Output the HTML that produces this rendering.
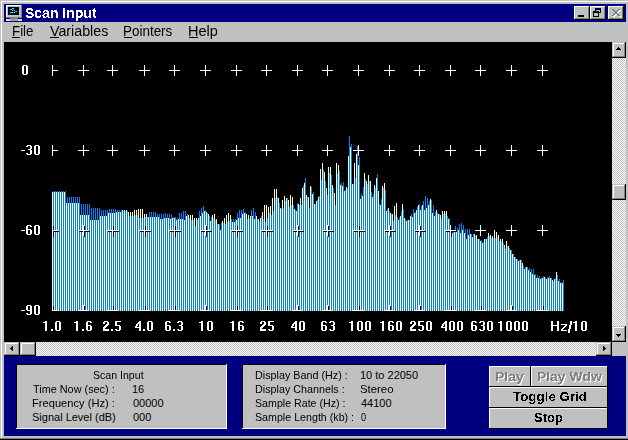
<!DOCTYPE html>
<html><head><meta charset="utf-8">
<style>
html,body{margin:0;padding:0;width:628px;height:440px;overflow:hidden;background:#c0c0c0;}
body{position:relative;font-family:"Liberation Sans",sans-serif;}
.a{position:absolute;}
.tx{position:absolute;white-space:pre;line-height:1;}
.crisp{filter:url(#crisp);}
.chk{position:absolute;background-color:#fff;background-image:linear-gradient(45deg,#c0c0c0 25%,transparent 25%,transparent 75%,#c0c0c0 75%),linear-gradient(45deg,#c0c0c0 25%,transparent 25%,transparent 75%,#c0c0c0 75%);background-size:2px 2px;background-position:0 0,1px 1px;}
.cb{position:absolute;box-sizing:border-box;background:#c0c0c0;box-shadow:inset -1px -1px #000,inset 1px 1px #fff,inset -2px -2px #808080;}
.btn{position:absolute;box-sizing:border-box;background:#c0c0c0;box-shadow:inset -1px -1px #000,inset 1px 1px #c0c0c0,inset -2px -2px #808080,inset 2px 2px #fff;}
.pb{position:absolute;box-sizing:border-box;background:#c0c0c0;box-shadow:inset -1px -1px #000,inset 1px 1px #fff;}
.pt{position:absolute;white-space:pre;line-height:1;font-weight:bold;font-size:13px;color:#000;}
.dis{color:#808080 !important;text-shadow:1px 1px 0 #fff;}
.lbl{position:absolute;white-space:pre;line-height:1;color:#fff;font-weight:bold;filter:url(#crisp);}
.ly{font-size:14px;letter-spacing:0.5px;}
.lx{font-size:14px;letter-spacing:0.8px;}
.pan{position:absolute;box-sizing:border-box;background:#c0c0c0;box-shadow:inset -1px -1px #fff,inset 1px 1px #000;}
.mu{position:absolute;white-space:pre;line-height:1;font-size:14px;color:#000;letter-spacing:0.2px;}
</style></head><body>
<svg width="0" height="0" style="position:absolute"><filter id="crisp" x="0" y="0" width="100%" height="100%"><feComponentTransfer><feFuncA type="discrete" tableValues="0 1"/></feComponentTransfer></filter></svg>
<div class="a" style="left:1px;top:1px;width:627px;height:1px;background:#fff"></div>
<div class="a" style="left:1px;top:1px;width:1px;height:437px;background:#fff"></div>
<div class="a" style="left:0;top:438px;width:628px;height:1px;background:#808080"></div>
<div class="a" style="left:0;top:439px;width:628px;height:1px;background:#000"></div>
<div class="a" style="left:4px;top:4px;width:622px;height:18px;background:#000080"></div>
<svg class="a" style="left:6px;top:5px" width="17" height="16" shape-rendering="crispEdges">
<rect x="0" y="0" width="16" height="13" fill="#c0c0c0"/>
<rect x="0" y="0" width="16" height="1" fill="#fff"/><rect x="0" y="0" width="1" height="13" fill="#fff"/>
<rect x="15" y="0" width="1" height="13" fill="#808080"/><rect x="0" y="12" width="16" height="1" fill="#808080"/>
<rect x="2" y="2" width="11" height="8" fill="#000"/>
<path d="M6 3h2v1h-2zM4 4h2v1h-2zM6 5h1v1h-1zM8 5h1v1h-1zM10 6h1v1h-1zM4 7h5v1h-5z" fill="#00ffff"/>
<path d="M7 4h1v1h-1zM9 6h1v1h-1zM7 7h1v1h-1z" fill="#0080ff"/>
<rect x="12" y="11" width="1" height="1" fill="#00ff00"/>
<rect x="4" y="13" width="8" height="2" fill="#808080"/>
<rect x="0" y="14" width="16" height="2" fill="#e0e0e0"/>
<rect x="4" y="14" width="8" height="2" fill="#a0a0a0"/>
</svg>
<div class="tx crisp" style="left:25.0px;top:6px;font-size:14px;font-weight:bold;color:#fff;">Scan Input</div>
<div class="cb" style="left:574px;top:6px;width:16px;height:14px"><div class="a" style="left:4px;top:9px;width:6px;height:2px;background:#000"></div></div>
<div class="cb" style="left:590px;top:6px;width:16px;height:14px"><svg class="a" style="left:3px;top:2px" width="9" height="9" shape-rendering="crispEdges"><path d="M2 0h6v1h-6zM2 1h6v1h-6zM2 0h1v3h-1zM7 0h1v5h-1zM6 4h2v1h-2zM0 3h6v1h-6zM0 4h6v1h-6zM0 3h1v6h-1zM5 3h1v6h-1zM0 8h6v1h-6z" fill="#000"/></svg></div>
<div class="cb" style="left:608px;top:6px;width:16px;height:14px"><svg class="a" style="left:4px;top:3px" width="9" height="8" shape-rendering="crispEdges"><path d="M0 0h2v1h-2zM6 0h2v1h-2zM1 1h2v1h-2zM5 1h2v1h-2zM2 2h4v1h-4zM3 3h2v1h-2zM2 4h4v1h-4zM1 5h2v1h-2zM5 5h2v1h-2zM0 6h2v1h-2zM6 6h2v1h-2z" fill="#fff" transform="translate(1,1)"/><path d="M0 0h2v1h-2zM6 0h2v1h-2zM1 1h2v1h-2zM5 1h2v1h-2zM2 2h4v1h-4zM3 3h2v1h-2zM2 4h4v1h-4zM1 5h2v1h-2zM5 5h2v1h-2zM0 6h2v1h-2zM6 6h2v1h-2z" fill="#808080"/></svg></div>
<div class="tx" style="left:12.05px;top:24px;font-size:14px;color:#000;transform:scaleX(0.9524);transform-origin:0 0;">File</div><div class="a" style="left:12px;top:37px;width:8px;height:1px;background:#000"></div><div class="tx" style="left:50.0px;top:24px;font-size:14px;color:#000;transform:scaleX(1.0175);transform-origin:0 0;">Variables</div><div class="a" style="left:50px;top:37px;width:9px;height:1px;background:#000"></div><div class="tx" style="left:123.04px;top:24px;font-size:14px;color:#000;transform:scaleX(0.96);transform-origin:0 0;">Pointers</div><div class="a" style="left:124px;top:37px;width:8px;height:1px;background:#000"></div><div class="tx" style="left:187.96px;top:24px;font-size:14px;color:#000;transform:scaleX(1.037);transform-origin:0 0;">Help</div><div class="a" style="left:189px;top:37px;width:9px;height:1px;background:#000"></div>
<svg width="628" height="440" style="position:absolute;left:0;top:0" shape-rendering="crispEdges"><rect x="4" y="42" width="608" height="300" fill="#000"/><path fill="#ffffc0" d="M52 192h1V311h-1zM54 192h1V311h-1zM56 192h1V311h-1zM58 192h1V311h-1zM60 192h1V311h-1zM62 192h1V311h-1zM64 192h1V311h-1zM66 203h1V311h-1zM68 203h1V311h-1zM70 203h1V311h-1zM72 203h1V311h-1zM74 203h1V311h-1zM76 203h1V311h-1zM78 203h1V311h-1zM80 215h1V311h-1zM82 215h1V311h-1zM84 215h1V311h-1zM86 215h1V311h-1zM88 215h1V311h-1zM90 220h1V311h-1zM92 220h1V311h-1zM94 220h1V311h-1zM96 220h1V311h-1zM98 220h1V311h-1zM100 216h1V311h-1zM102 216h1V311h-1zM104 216h1V311h-1zM106 216h1V311h-1zM108 213h1V311h-1zM110 213h1V311h-1zM112 213h1V311h-1zM114 213h1V311h-1zM116 212h1V311h-1zM118 212h1V311h-1zM120 212h1V311h-1zM122 210h1V311h-1zM124 210h1V311h-1zM126 210h1V311h-1zM128 212h1V311h-1zM130 212h1V311h-1zM132 212h1V311h-1zM134 210h1V311h-1zM136 210h1V311h-1zM138 209h1V311h-1zM140 209h1V311h-1zM142 209h1V311h-1zM144 214h1V311h-1zM146 214h1V311h-1zM148 217h1V311h-1zM150 217h1V311h-1zM152 217h1V311h-1zM154 217h1V311h-1zM156 217h1V311h-1zM158 217h1V311h-1zM160 219h1V311h-1zM162 219h1V311h-1zM164 218h1V311h-1zM166 218h1V311h-1zM168 218h1V311h-1zM170 219h1V311h-1zM172 218h1V311h-1zM174 218h1V311h-1zM176 220h1V311h-1zM178 219h1V311h-1zM180 219h1V311h-1zM182 219h1V311h-1zM184 220h1V311h-1zM186 216h1V311h-1zM188 215h1V311h-1zM190 215h1V311h-1zM192 215h1V311h-1zM194 218h1V311h-1zM196 218h1V311h-1zM198 218h1V311h-1zM200 216h1V311h-1zM202 213h1V311h-1zM204 211h1V311h-1zM206 212h1V311h-1zM208 214h1V311h-1zM210 221h1V311h-1zM212 215h1V311h-1zM214 214h1V311h-1zM216 219h1V311h-1zM218 224h1V311h-1zM220 230h1V311h-1zM222 221h1V311h-1zM224 218h1V311h-1zM226 215h1V311h-1zM228 213h1V311h-1zM230 215h1V311h-1zM232 222h1V311h-1zM234 222h1V311h-1zM236 220h1V311h-1zM238 218h1V311h-1zM240 218h1V311h-1zM242 214h1V311h-1zM244 213h1V311h-1zM246 214h1V311h-1zM248 215h1V311h-1zM250 216h1V311h-1zM252 216h1V311h-1zM254 219h1V311h-1zM256 216h1V311h-1zM258 219h1V311h-1zM260 218h1V311h-1zM262 212h1V311h-1zM264 205h1V311h-1zM266 205h1V311h-1zM268 207h1V311h-1zM270 206h1V311h-1zM272 198h1V311h-1zM274 189h1V311h-1zM276 189h1V311h-1zM278 198h1V311h-1zM280 208h1V311h-1zM282 200h1V311h-1zM284 196h1V311h-1zM286 198h1V311h-1zM288 200h1V311h-1zM290 195h1V311h-1zM292 197h1V311h-1zM294 209h1V311h-1zM296 211h1V311h-1zM298 204h1V311h-1zM300 198h1V311h-1zM302 188h1V311h-1zM304 183h1V311h-1zM306 195h1V311h-1zM308 197h1V311h-1zM310 186h1V311h-1zM312 194h1V311h-1zM314 204h1V311h-1zM316 201h1V311h-1zM318 197h1V311h-1zM320 169h1V311h-1zM322 163h1V311h-1zM324 172h1V311h-1zM326 188h1V311h-1zM328 167h1V311h-1zM330 167h1V311h-1zM332 185h1V311h-1zM334 193h1V311h-1zM336 163h1V311h-1zM338 165h1V311h-1zM340 185h1V311h-1zM342 186h1V311h-1zM344 191h1V311h-1zM346 187h1V311h-1zM348 156h1V311h-1zM350 147h1V311h-1zM352 184h1V311h-1zM354 163h1V311h-1zM356 154h1V311h-1zM358 165h1V311h-1zM360 199h1V311h-1zM362 196h1V311h-1zM364 173h1V311h-1zM366 181h1V311h-1zM368 175h1V311h-1zM370 181h1V311h-1zM372 197h1V311h-1zM374 185h1V311h-1zM376 178h1V311h-1zM378 191h1V311h-1zM380 205h1V311h-1zM382 186h1V311h-1zM384 183h1V311h-1zM386 211h1V311h-1zM388 208h1V311h-1zM390 213h1V311h-1zM392 214h1V311h-1zM394 206h1V311h-1zM396 203h1V311h-1zM398 220h1V311h-1zM400 216h1V311h-1zM402 204h1V311h-1zM404 218h1V311h-1zM406 221h1V311h-1zM408 220h1V311h-1zM410 216h1V311h-1zM412 217h1V311h-1zM414 213h1V311h-1zM416 210h1V311h-1zM418 205h1V311h-1zM420 210h1V311h-1zM422 205h1V311h-1zM424 210h1V311h-1zM426 208h1V311h-1zM428 205h1V311h-1zM430 199h1V311h-1zM432 213h1V311h-1zM434 216h1V311h-1zM436 210h1V311h-1zM438 214h1V311h-1zM440 215h1V311h-1zM442 211h1V311h-1zM444 211h1V311h-1zM446 211h1V311h-1zM448 219h1V311h-1zM450 225h1V311h-1zM452 233h1V311h-1zM454 231h1V311h-1zM456 232h1V311h-1zM458 230h1V311h-1zM460 233h1V311h-1zM462 230h1V311h-1zM464 233h1V311h-1zM466 239h1V311h-1zM468 235h1V311h-1zM470 234h1V311h-1zM472 237h1V311h-1zM474 234h1V311h-1zM476 235h1V311h-1zM478 239h1V311h-1zM480 241h1V311h-1zM482 243h1V311h-1zM484 239h1V311h-1zM486 239h1V311h-1zM488 233h1V311h-1zM490 235h1V311h-1zM492 236h1V311h-1zM494 230h1V311h-1zM496 232h1V311h-1zM498 235h1V311h-1zM500 239h1V311h-1zM502 239h1V311h-1zM504 245h1V311h-1zM506 241h1V311h-1zM508 246h1V311h-1zM510 250h1V311h-1zM512 254h1V311h-1zM514 257h1V311h-1zM516 259h1V311h-1zM518 261h1V311h-1zM520 260h1V311h-1zM522 263h1V311h-1zM524 269h1V311h-1zM526 267h1V311h-1zM528 270h1V311h-1zM530 272h1V311h-1zM532 274h1V311h-1zM534 275h1V311h-1zM536 278h1V311h-1zM538 278h1V311h-1zM540 279h1V311h-1zM542 278h1V311h-1zM544 277h1V311h-1zM546 279h1V311h-1zM548 278h1V311h-1zM550 278h1V311h-1zM552 280h1V311h-1zM554 279h1V311h-1zM556 272h1V311h-1zM558 281h1V311h-1zM560 283h1V311h-1zM562 283h1V311h-1z"/><path fill="#0080ff" d="M53 191h1V311h-1zM55 191h1V311h-1zM57 191h1V311h-1zM59 191h1V311h-1zM61 191h1V311h-1zM63 191h1V311h-1zM65 191h1V311h-1zM67 197h1V311h-1zM69 197h1V311h-1zM71 197h1V311h-1zM73 197h1V311h-1zM75 197h1V311h-1zM77 197h1V311h-1zM79 197h1V311h-1zM81 204h1V311h-1zM83 204h1V311h-1zM85 204h1V311h-1zM87 204h1V311h-1zM89 204h1V311h-1zM91 208h1V311h-1zM93 208h1V311h-1zM95 208h1V311h-1zM97 208h1V311h-1zM99 208h1V311h-1zM101 210h1V311h-1zM103 210h1V311h-1zM105 210h1V311h-1zM107 210h1V311h-1zM109 209h1V311h-1zM111 209h1V311h-1zM113 209h1V311h-1zM115 209h1V311h-1zM117 210h1V311h-1zM119 210h1V311h-1zM121 210h1V311h-1zM123 211h1V311h-1zM125 211h1V311h-1zM127 211h1V311h-1zM129 216h1V311h-1zM131 216h1V311h-1zM133 216h1V311h-1zM135 215h1V311h-1zM137 215h1V311h-1zM139 218h1V311h-1zM141 218h1V311h-1zM143 218h1V311h-1zM145 217h1V311h-1zM147 217h1V311h-1zM149 212h1V311h-1zM151 212h1V311h-1zM153 212h1V311h-1zM155 212h1V311h-1zM157 214h1V311h-1zM159 214h1V311h-1zM161 214h1V311h-1zM163 214h1V311h-1zM165 213h1V311h-1zM167 214h1V311h-1zM169 214h1V311h-1zM171 215h1V311h-1zM173 217h1V311h-1zM175 217h1V311h-1zM177 218h1V311h-1zM179 213h1V311h-1zM181 213h1V311h-1zM183 211h1V311h-1zM185 211h1V311h-1zM187 214h1V311h-1zM189 218h1V311h-1zM191 220h1V311h-1zM193 220h1V311h-1zM195 226h1V311h-1zM197 220h1V311h-1zM199 211h1V311h-1zM201 208h1V311h-1zM203 206h1V311h-1zM205 210h1V311h-1zM207 213h1V311h-1zM209 216h1V311h-1zM211 217h1V311h-1zM213 218h1V311h-1zM215 220h1V311h-1zM217 224h1V311h-1zM219 224h1V311h-1zM221 223h1V311h-1zM223 223h1V311h-1zM225 224h1V311h-1zM227 222h1V311h-1zM229 221h1V311h-1zM231 219h1V311h-1zM233 219h1V311h-1zM235 219h1V311h-1zM237 213h1V311h-1zM239 210h1V311h-1zM241 210h1V311h-1zM243 209h1V311h-1zM245 212h1V311h-1zM247 219h1V311h-1zM249 219h1V311h-1zM251 210h1V311h-1zM253 208h1V311h-1zM255 212h1V311h-1zM257 219h1V311h-1zM259 221h1V311h-1zM261 216h1V311h-1zM263 219h1V311h-1zM265 222h1V311h-1zM267 218h1V311h-1zM269 213h1V311h-1zM271 215h1V311h-1zM273 211h1V311h-1zM275 198h1V311h-1zM277 197h1V311h-1zM279 203h1V311h-1zM281 209h1V311h-1zM283 208h1V311h-1zM285 201h1V311h-1zM287 198h1V311h-1zM289 207h1V311h-1zM291 205h1V311h-1zM293 205h1V311h-1zM295 210h1V311h-1zM297 203h1V311h-1zM299 205h1V311h-1zM301 205h1V311h-1zM303 186h1V311h-1zM305 178h1V311h-1zM307 197h1V311h-1zM309 208h1V311h-1zM311 187h1V311h-1zM313 192h1V311h-1zM315 204h1V311h-1zM317 200h1V311h-1zM319 196h1V311h-1zM321 180h1V311h-1zM323 170h1V311h-1zM325 181h1V311h-1zM327 195h1V311h-1zM329 173h1V311h-1zM331 175h1V311h-1zM333 188h1V311h-1zM335 205h1V311h-1zM337 174h1V311h-1zM339 171h1V311h-1zM341 183h1V311h-1zM343 182h1V311h-1zM345 190h1V311h-1zM347 188h1V311h-1zM349 136h1V311h-1zM351 144h1V311h-1zM353 184h1V311h-1zM355 178h1V311h-1zM357 146h1V311h-1zM359 157h1V311h-1zM361 194h1V311h-1zM363 187h1V311h-1zM365 179h1V311h-1zM367 184h1V311h-1zM369 181h1V311h-1zM371 192h1V311h-1zM373 194h1V311h-1zM375 187h1V311h-1zM377 174h1V311h-1zM379 204h1V311h-1zM381 199h1V311h-1zM383 188h1V311h-1zM385 190h1V311h-1zM387 209h1V311h-1zM389 211h1V311h-1zM391 214h1V311h-1zM393 221h1V311h-1zM395 215h1V311h-1zM397 217h1V311h-1zM399 218h1V311h-1zM401 211h1V311h-1zM403 209h1V311h-1zM405 219h1V311h-1zM407 220h1V311h-1zM409 220h1V311h-1zM411 214h1V311h-1zM413 209h1V311h-1zM415 212h1V311h-1zM417 207h1V311h-1zM419 204h1V311h-1zM421 206h1V311h-1zM423 201h1V311h-1zM425 196h1V311h-1zM427 198h1V311h-1zM429 201h1V311h-1zM431 200h1V311h-1zM433 205h1V311h-1zM435 212h1V311h-1zM437 213h1V311h-1zM439 214h1V311h-1zM441 218h1V311h-1zM443 214h1V311h-1zM445 213h1V311h-1zM447 216h1V311h-1zM449 218h1V311h-1zM451 230h1V311h-1zM453 232h1V311h-1zM455 226h1V311h-1zM457 228h1V311h-1zM459 224h1V311h-1zM461 223h1V311h-1zM463 225h1V311h-1zM465 229h1V311h-1zM467 229h1V311h-1zM469 229h1V311h-1zM471 234h1V311h-1zM473 234h1V311h-1zM475 236h1V311h-1zM477 239h1V311h-1zM479 239h1V311h-1zM481 240h1V311h-1zM483 242h1V311h-1zM485 239h1V311h-1zM487 237h1V311h-1zM489 236h1V311h-1zM491 238h1V311h-1zM493 238h1V311h-1zM495 238h1V311h-1zM497 237h1V311h-1zM499 241h1V311h-1zM501 241h1V311h-1zM503 243h1V311h-1zM505 249h1V311h-1zM507 246h1V311h-1zM509 248h1V311h-1zM511 250h1V311h-1zM513 254h1V311h-1zM515 257h1V311h-1zM517 259h1V311h-1zM519 260h1V311h-1zM521 260h1V311h-1zM523 266h1V311h-1zM525 267h1V311h-1zM527 267h1V311h-1zM529 268h1V311h-1zM531 269h1V311h-1zM533 269h1V311h-1zM535 274h1V311h-1zM537 275h1V311h-1zM539 276h1V311h-1zM541 278h1V311h-1zM543 276h1V311h-1zM545 278h1V311h-1zM547 277h1V311h-1zM549 276h1V311h-1zM551 278h1V311h-1zM553 281h1V311h-1zM555 278h1V311h-1zM557 275h1V311h-1zM559 279h1V311h-1zM561 282h1V311h-1zM563 280h1V311h-1z"/><path fill="#000" d="M53 66h1V77h-1zM53 71h6v1h-6zM84 66h1V77h-1zM79 71h11v1h-11zM113 66h1V77h-1zM108 71h11v1h-11zM145 66h1V77h-1zM140 71h11v1h-11zM175 66h1V77h-1zM170 71h11v1h-11zM206 66h1V77h-1zM201 71h11v1h-11zM237 66h1V77h-1zM232 71h11v1h-11zM267 66h1V77h-1zM262 71h11v1h-11zM298 66h1V77h-1zM293 71h11v1h-11zM328 66h1V77h-1zM323 71h11v1h-11zM359 66h1V77h-1zM354 71h11v1h-11zM390 66h1V77h-1zM385 71h11v1h-11zM420 66h1V77h-1zM415 71h11v1h-11zM451 66h1V77h-1zM446 71h11v1h-11zM481 66h1V77h-1zM476 71h11v1h-11zM512 66h1V77h-1zM507 71h11v1h-11zM543 66h1V77h-1zM538 71h11v1h-11zM53 146h1V157h-1zM53 151h6v1h-6zM84 146h1V157h-1zM79 151h11v1h-11zM113 146h1V157h-1zM108 151h11v1h-11zM145 146h1V157h-1zM140 151h11v1h-11zM175 146h1V157h-1zM170 151h11v1h-11zM206 146h1V157h-1zM201 151h11v1h-11zM237 146h1V157h-1zM232 151h11v1h-11zM267 146h1V157h-1zM262 151h11v1h-11zM298 146h1V157h-1zM293 151h11v1h-11zM328 146h1V157h-1zM323 151h11v1h-11zM359 146h1V157h-1zM354 151h11v1h-11zM390 146h1V157h-1zM385 151h11v1h-11zM420 146h1V157h-1zM415 151h11v1h-11zM451 146h1V157h-1zM446 151h11v1h-11zM481 146h1V157h-1zM476 151h11v1h-11zM512 146h1V157h-1zM507 151h11v1h-11zM543 146h1V157h-1zM538 151h11v1h-11zM53 226h1V237h-1zM53 231h6v1h-6zM84 226h1V237h-1zM79 231h11v1h-11zM113 226h1V237h-1zM108 231h11v1h-11zM145 226h1V237h-1zM140 231h11v1h-11zM175 226h1V237h-1zM170 231h11v1h-11zM206 226h1V237h-1zM201 231h11v1h-11zM237 226h1V237h-1zM232 231h11v1h-11zM267 226h1V237h-1zM262 231h11v1h-11zM298 226h1V237h-1zM293 231h11v1h-11zM328 226h1V237h-1zM323 231h11v1h-11zM359 226h1V237h-1zM354 231h11v1h-11zM390 226h1V237h-1zM385 231h11v1h-11zM420 226h1V237h-1zM415 231h11v1h-11zM451 226h1V237h-1zM446 231h11v1h-11zM481 226h1V237h-1zM476 231h11v1h-11zM512 226h1V237h-1zM507 231h11v1h-11zM543 226h1V237h-1zM538 231h11v1h-11zM53 306h1V311h-1zM84 306h1V311h-1zM113 306h1V311h-1zM145 306h1V311h-1zM175 306h1V311h-1zM206 306h1V311h-1zM237 306h1V311h-1zM267 306h1V311h-1zM298 306h1V311h-1zM328 306h1V311h-1zM359 306h1V311h-1zM390 306h1V311h-1zM420 306h1V311h-1zM451 306h1V311h-1zM481 306h1V311h-1zM512 306h1V311h-1zM543 306h1V311h-1z"/><path fill="#fff" d="M52 65h1V76h-1zM52 70h6v1h-6zM83 65h1V76h-1zM78 70h11v1h-11zM112 65h1V76h-1zM107 70h11v1h-11zM144 65h1V76h-1zM139 70h11v1h-11zM174 65h1V76h-1zM169 70h11v1h-11zM205 65h1V76h-1zM200 70h11v1h-11zM236 65h1V76h-1zM231 70h11v1h-11zM266 65h1V76h-1zM261 70h11v1h-11zM297 65h1V76h-1zM292 70h11v1h-11zM327 65h1V76h-1zM322 70h11v1h-11zM358 65h1V76h-1zM353 70h11v1h-11zM389 65h1V76h-1zM384 70h11v1h-11zM419 65h1V76h-1zM414 70h11v1h-11zM450 65h1V76h-1zM445 70h11v1h-11zM480 65h1V76h-1zM475 70h11v1h-11zM511 65h1V76h-1zM506 70h11v1h-11zM542 65h1V76h-1zM537 70h11v1h-11zM52 145h1V156h-1zM52 150h6v1h-6zM83 145h1V156h-1zM78 150h11v1h-11zM112 145h1V156h-1zM107 150h11v1h-11zM144 145h1V156h-1zM139 150h11v1h-11zM174 145h1V156h-1zM169 150h11v1h-11zM205 145h1V156h-1zM200 150h11v1h-11zM236 145h1V156h-1zM231 150h11v1h-11zM266 145h1V156h-1zM261 150h11v1h-11zM297 145h1V156h-1zM292 150h11v1h-11zM327 145h1V156h-1zM322 150h11v1h-11zM358 145h1V156h-1zM353 150h11v1h-11zM389 145h1V156h-1zM384 150h11v1h-11zM419 145h1V156h-1zM414 150h11v1h-11zM450 145h1V156h-1zM445 150h11v1h-11zM480 145h1V156h-1zM475 150h11v1h-11zM511 145h1V156h-1zM506 150h11v1h-11zM542 145h1V156h-1zM537 150h11v1h-11zM52 225h1V236h-1zM52 230h6v1h-6zM83 225h1V236h-1zM78 230h11v1h-11zM112 225h1V236h-1zM107 230h11v1h-11zM144 225h1V236h-1zM139 230h11v1h-11zM174 225h1V236h-1zM169 230h11v1h-11zM205 225h1V236h-1zM200 230h11v1h-11zM236 225h1V236h-1zM231 230h11v1h-11zM266 225h1V236h-1zM261 230h11v1h-11zM297 225h1V236h-1zM292 230h11v1h-11zM327 225h1V236h-1zM322 230h11v1h-11zM358 225h1V236h-1zM353 230h11v1h-11zM389 225h1V236h-1zM384 230h11v1h-11zM419 225h1V236h-1zM414 230h11v1h-11zM450 225h1V236h-1zM445 230h11v1h-11zM480 225h1V236h-1zM475 230h11v1h-11zM511 225h1V236h-1zM506 230h11v1h-11zM542 225h1V236h-1zM537 230h11v1h-11zM52 305h1V311h-1zM52 310h6v1h-6zM83 305h1V311h-1zM78 310h11v1h-11zM112 305h1V311h-1zM107 310h11v1h-11zM144 305h1V311h-1zM139 310h11v1h-11zM174 305h1V311h-1zM169 310h11v1h-11zM205 305h1V311h-1zM200 310h11v1h-11zM236 305h1V311h-1zM231 310h11v1h-11zM266 305h1V311h-1zM261 310h11v1h-11zM297 305h1V311h-1zM292 310h11v1h-11zM327 305h1V311h-1zM322 310h11v1h-11zM358 305h1V311h-1zM353 310h11v1h-11zM389 305h1V311h-1zM384 310h11v1h-11zM419 305h1V311h-1zM414 310h11v1h-11zM450 305h1V311h-1zM445 310h11v1h-11zM480 305h1V311h-1zM475 310h11v1h-11zM511 305h1V311h-1zM506 310h11v1h-11zM542 305h1V311h-1zM537 310h11v1h-11z"/></svg>
<svg class="a" style="left:0;top:0" width="628" height="440" shape-rendering="crispEdges"><path fill="#fff" d="M23 65h4v1h-4zM22 66h2v1h-2zM26 66h2v1h-2zM22 67h2v1h-2zM26 67h2v1h-2zM22 68h2v1h-2zM26 68h2v1h-2zM22 69h2v1h-2zM26 69h2v1h-2zM22 70h2v1h-2zM26 70h2v1h-2zM22 71h2v1h-2zM26 71h2v1h-2zM22 72h2v1h-2zM26 72h2v1h-2zM22 73h2v1h-2zM26 73h2v1h-2zM23 74h4v1h-4zM27 145h4v1h-4zM26 146h2v1h-2zM30 146h2v1h-2zM30 147h2v1h-2zM30 148h2v1h-2zM28 149h3v1h-3zM30 150h2v1h-2zM30 151h2v1h-2zM30 152h2v1h-2zM26 153h2v1h-2zM30 153h2v1h-2zM27 154h4v1h-4zM35 145h4v1h-4zM34 146h2v1h-2zM38 146h2v1h-2zM34 147h2v1h-2zM38 147h2v1h-2zM34 148h2v1h-2zM38 148h2v1h-2zM34 149h2v1h-2zM38 149h2v1h-2zM34 150h2v1h-2zM38 150h2v1h-2zM34 151h2v1h-2zM38 151h2v1h-2zM34 152h2v1h-2zM38 152h2v1h-2zM34 153h2v1h-2zM38 153h2v1h-2zM35 154h4v1h-4zM21 150h4v1h-4zM27 225h4v1h-4zM26 226h2v1h-2zM30 226h2v1h-2zM26 227h2v1h-2zM26 228h2v1h-2zM26 229h5v1h-5zM26 230h2v1h-2zM30 230h2v1h-2zM26 231h2v1h-2zM30 231h2v1h-2zM26 232h2v1h-2zM30 232h2v1h-2zM26 233h2v1h-2zM30 233h2v1h-2zM27 234h4v1h-4zM35 225h4v1h-4zM34 226h2v1h-2zM38 226h2v1h-2zM34 227h2v1h-2zM38 227h2v1h-2zM34 228h2v1h-2zM38 228h2v1h-2zM34 229h2v1h-2zM38 229h2v1h-2zM34 230h2v1h-2zM38 230h2v1h-2zM34 231h2v1h-2zM38 231h2v1h-2zM34 232h2v1h-2zM38 232h2v1h-2zM34 233h2v1h-2zM38 233h2v1h-2zM35 234h4v1h-4zM21 230h4v1h-4zM27 305h4v1h-4zM26 306h2v1h-2zM30 306h2v1h-2zM26 307h2v1h-2zM30 307h2v1h-2zM26 308h2v1h-2zM30 308h2v1h-2zM26 309h2v1h-2zM30 309h2v1h-2zM27 310h5v1h-5zM30 311h2v1h-2zM30 312h2v1h-2zM26 313h2v1h-2zM30 313h2v1h-2zM27 314h4v1h-4zM35 305h4v1h-4zM34 306h2v1h-2zM38 306h2v1h-2zM34 307h2v1h-2zM38 307h2v1h-2zM34 308h2v1h-2zM38 308h2v1h-2zM34 309h2v1h-2zM38 309h2v1h-2zM34 310h2v1h-2zM38 310h2v1h-2zM34 311h2v1h-2zM38 311h2v1h-2zM34 312h2v1h-2zM38 312h2v1h-2zM34 313h2v1h-2zM38 313h2v1h-2zM35 314h4v1h-4zM21 310h4v1h-4zM45 321h2v1h-2zM43 322h4v1h-4zM45 323h2v1h-2zM45 324h2v1h-2zM45 325h2v1h-2zM45 326h2v1h-2zM45 327h2v1h-2zM45 328h2v1h-2zM45 329h2v1h-2zM45 330h2v1h-2zM51 329h2v1h-2zM51 330h2v1h-2zM56 321h4v1h-4zM55 322h2v1h-2zM59 322h2v1h-2zM55 323h2v1h-2zM59 323h2v1h-2zM55 324h2v1h-2zM59 324h2v1h-2zM55 325h2v1h-2zM59 325h2v1h-2zM55 326h2v1h-2zM59 326h2v1h-2zM55 327h2v1h-2zM59 327h2v1h-2zM55 328h2v1h-2zM59 328h2v1h-2zM55 329h2v1h-2zM59 329h2v1h-2zM56 330h4v1h-4zM76 321h2v1h-2zM74 322h4v1h-4zM76 323h2v1h-2zM76 324h2v1h-2zM76 325h2v1h-2zM76 326h2v1h-2zM76 327h2v1h-2zM76 328h2v1h-2zM76 329h2v1h-2zM76 330h2v1h-2zM82 329h2v1h-2zM82 330h2v1h-2zM87 321h4v1h-4zM86 322h2v1h-2zM90 322h2v1h-2zM86 323h2v1h-2zM86 324h2v1h-2zM86 325h5v1h-5zM86 326h2v1h-2zM90 326h2v1h-2zM86 327h2v1h-2zM90 327h2v1h-2zM86 328h2v1h-2zM90 328h2v1h-2zM86 329h2v1h-2zM90 329h2v1h-2zM87 330h4v1h-4zM104 321h4v1h-4zM103 322h2v1h-2zM107 322h2v1h-2zM103 323h2v1h-2zM107 323h2v1h-2zM106 324h3v1h-3zM105 325h3v1h-3zM104 326h3v1h-3zM103 327h3v1h-3zM103 328h2v1h-2zM103 329h6v1h-6zM103 330h6v1h-6zM111 329h2v1h-2zM111 330h2v1h-2zM115 321h6v1h-6zM115 322h2v1h-2zM115 323h2v1h-2zM115 324h2v1h-2zM115 325h5v1h-5zM119 326h2v1h-2zM119 327h2v1h-2zM119 328h2v1h-2zM115 329h2v1h-2zM119 329h2v1h-2zM116 330h4v1h-4zM139 321h2v1h-2zM138 322h3v1h-3zM137 323h4v1h-4zM136 324h2v1h-2zM139 324h2v1h-2zM136 325h2v1h-2zM139 325h2v1h-2zM135 326h2v1h-2zM139 326h2v1h-2zM135 327h6v1h-6zM139 328h2v1h-2zM139 329h2v1h-2zM139 330h2v1h-2zM143 329h2v1h-2zM143 330h2v1h-2zM148 321h4v1h-4zM147 322h2v1h-2zM151 322h2v1h-2zM147 323h2v1h-2zM151 323h2v1h-2zM147 324h2v1h-2zM151 324h2v1h-2zM147 325h2v1h-2zM151 325h2v1h-2zM147 326h2v1h-2zM151 326h2v1h-2zM147 327h2v1h-2zM151 327h2v1h-2zM147 328h2v1h-2zM151 328h2v1h-2zM147 329h2v1h-2zM151 329h2v1h-2zM148 330h4v1h-4zM166 321h4v1h-4zM165 322h2v1h-2zM169 322h2v1h-2zM165 323h2v1h-2zM165 324h2v1h-2zM165 325h5v1h-5zM165 326h2v1h-2zM169 326h2v1h-2zM165 327h2v1h-2zM169 327h2v1h-2zM165 328h2v1h-2zM169 328h2v1h-2zM165 329h2v1h-2zM169 329h2v1h-2zM166 330h4v1h-4zM173 329h2v1h-2zM173 330h2v1h-2zM178 321h4v1h-4zM177 322h2v1h-2zM181 322h2v1h-2zM181 323h2v1h-2zM181 324h2v1h-2zM179 325h3v1h-3zM181 326h2v1h-2zM181 327h2v1h-2zM181 328h2v1h-2zM177 329h2v1h-2zM181 329h2v1h-2zM178 330h4v1h-4zM201 321h2v1h-2zM199 322h4v1h-4zM201 323h2v1h-2zM201 324h2v1h-2zM201 325h2v1h-2zM201 326h2v1h-2zM201 327h2v1h-2zM201 328h2v1h-2zM201 329h2v1h-2zM201 330h2v1h-2zM208 321h4v1h-4zM207 322h2v1h-2zM211 322h2v1h-2zM207 323h2v1h-2zM211 323h2v1h-2zM207 324h2v1h-2zM211 324h2v1h-2zM207 325h2v1h-2zM211 325h2v1h-2zM207 326h2v1h-2zM211 326h2v1h-2zM207 327h2v1h-2zM211 327h2v1h-2zM207 328h2v1h-2zM211 328h2v1h-2zM207 329h2v1h-2zM211 329h2v1h-2zM208 330h4v1h-4zM232 321h2v1h-2zM230 322h4v1h-4zM232 323h2v1h-2zM232 324h2v1h-2zM232 325h2v1h-2zM232 326h2v1h-2zM232 327h2v1h-2zM232 328h2v1h-2zM232 329h2v1h-2zM232 330h2v1h-2zM239 321h4v1h-4zM238 322h2v1h-2zM242 322h2v1h-2zM238 323h2v1h-2zM238 324h2v1h-2zM238 325h5v1h-5zM238 326h2v1h-2zM242 326h2v1h-2zM238 327h2v1h-2zM242 327h2v1h-2zM238 328h2v1h-2zM242 328h2v1h-2zM238 329h2v1h-2zM242 329h2v1h-2zM239 330h4v1h-4zM261 321h4v1h-4zM260 322h2v1h-2zM264 322h2v1h-2zM260 323h2v1h-2zM264 323h2v1h-2zM263 324h3v1h-3zM262 325h3v1h-3zM261 326h3v1h-3zM260 327h3v1h-3zM260 328h2v1h-2zM260 329h6v1h-6zM260 330h6v1h-6zM268 321h6v1h-6zM268 322h2v1h-2zM268 323h2v1h-2zM268 324h2v1h-2zM268 325h5v1h-5zM272 326h2v1h-2zM272 327h2v1h-2zM272 328h2v1h-2zM268 329h2v1h-2zM272 329h2v1h-2zM269 330h4v1h-4zM295 321h2v1h-2zM294 322h3v1h-3zM293 323h4v1h-4zM292 324h2v1h-2zM295 324h2v1h-2zM292 325h2v1h-2zM295 325h2v1h-2zM291 326h2v1h-2zM295 326h2v1h-2zM291 327h6v1h-6zM295 328h2v1h-2zM295 329h2v1h-2zM295 330h2v1h-2zM300 321h4v1h-4zM299 322h2v1h-2zM303 322h2v1h-2zM299 323h2v1h-2zM303 323h2v1h-2zM299 324h2v1h-2zM303 324h2v1h-2zM299 325h2v1h-2zM303 325h2v1h-2zM299 326h2v1h-2zM303 326h2v1h-2zM299 327h2v1h-2zM303 327h2v1h-2zM299 328h2v1h-2zM303 328h2v1h-2zM299 329h2v1h-2zM303 329h2v1h-2zM300 330h4v1h-4zM322 321h4v1h-4zM321 322h2v1h-2zM325 322h2v1h-2zM321 323h2v1h-2zM321 324h2v1h-2zM321 325h5v1h-5zM321 326h2v1h-2zM325 326h2v1h-2zM321 327h2v1h-2zM325 327h2v1h-2zM321 328h2v1h-2zM325 328h2v1h-2zM321 329h2v1h-2zM325 329h2v1h-2zM322 330h4v1h-4zM330 321h4v1h-4zM329 322h2v1h-2zM333 322h2v1h-2zM333 323h2v1h-2zM333 324h2v1h-2zM331 325h3v1h-3zM333 326h2v1h-2zM333 327h2v1h-2zM333 328h2v1h-2zM329 329h2v1h-2zM333 329h2v1h-2zM330 330h4v1h-4zM351 321h2v1h-2zM349 322h4v1h-4zM351 323h2v1h-2zM351 324h2v1h-2zM351 325h2v1h-2zM351 326h2v1h-2zM351 327h2v1h-2zM351 328h2v1h-2zM351 329h2v1h-2zM351 330h2v1h-2zM358 321h4v1h-4zM357 322h2v1h-2zM361 322h2v1h-2zM357 323h2v1h-2zM361 323h2v1h-2zM357 324h2v1h-2zM361 324h2v1h-2zM357 325h2v1h-2zM361 325h2v1h-2zM357 326h2v1h-2zM361 326h2v1h-2zM357 327h2v1h-2zM361 327h2v1h-2zM357 328h2v1h-2zM361 328h2v1h-2zM357 329h2v1h-2zM361 329h2v1h-2zM358 330h4v1h-4zM366 321h4v1h-4zM365 322h2v1h-2zM369 322h2v1h-2zM365 323h2v1h-2zM369 323h2v1h-2zM365 324h2v1h-2zM369 324h2v1h-2zM365 325h2v1h-2zM369 325h2v1h-2zM365 326h2v1h-2zM369 326h2v1h-2zM365 327h2v1h-2zM369 327h2v1h-2zM365 328h2v1h-2zM369 328h2v1h-2zM365 329h2v1h-2zM369 329h2v1h-2zM366 330h4v1h-4zM382 321h2v1h-2zM380 322h4v1h-4zM382 323h2v1h-2zM382 324h2v1h-2zM382 325h2v1h-2zM382 326h2v1h-2zM382 327h2v1h-2zM382 328h2v1h-2zM382 329h2v1h-2zM382 330h2v1h-2zM389 321h4v1h-4zM388 322h2v1h-2zM392 322h2v1h-2zM388 323h2v1h-2zM388 324h2v1h-2zM388 325h5v1h-5zM388 326h2v1h-2zM392 326h2v1h-2zM388 327h2v1h-2zM392 327h2v1h-2zM388 328h2v1h-2zM392 328h2v1h-2zM388 329h2v1h-2zM392 329h2v1h-2zM389 330h4v1h-4zM397 321h4v1h-4zM396 322h2v1h-2zM400 322h2v1h-2zM396 323h2v1h-2zM400 323h2v1h-2zM396 324h2v1h-2zM400 324h2v1h-2zM396 325h2v1h-2zM400 325h2v1h-2zM396 326h2v1h-2zM400 326h2v1h-2zM396 327h2v1h-2zM400 327h2v1h-2zM396 328h2v1h-2zM400 328h2v1h-2zM396 329h2v1h-2zM400 329h2v1h-2zM397 330h4v1h-4zM411 321h4v1h-4zM410 322h2v1h-2zM414 322h2v1h-2zM410 323h2v1h-2zM414 323h2v1h-2zM413 324h3v1h-3zM412 325h3v1h-3zM411 326h3v1h-3zM410 327h3v1h-3zM410 328h2v1h-2zM410 329h6v1h-6zM410 330h6v1h-6zM418 321h6v1h-6zM418 322h2v1h-2zM418 323h2v1h-2zM418 324h2v1h-2zM418 325h5v1h-5zM422 326h2v1h-2zM422 327h2v1h-2zM422 328h2v1h-2zM418 329h2v1h-2zM422 329h2v1h-2zM419 330h4v1h-4zM427 321h4v1h-4zM426 322h2v1h-2zM430 322h2v1h-2zM426 323h2v1h-2zM430 323h2v1h-2zM426 324h2v1h-2zM430 324h2v1h-2zM426 325h2v1h-2zM430 325h2v1h-2zM426 326h2v1h-2zM430 326h2v1h-2zM426 327h2v1h-2zM430 327h2v1h-2zM426 328h2v1h-2zM430 328h2v1h-2zM426 329h2v1h-2zM430 329h2v1h-2zM427 330h4v1h-4zM445 321h2v1h-2zM444 322h3v1h-3zM443 323h4v1h-4zM442 324h2v1h-2zM445 324h2v1h-2zM442 325h2v1h-2zM445 325h2v1h-2zM441 326h2v1h-2zM445 326h2v1h-2zM441 327h6v1h-6zM445 328h2v1h-2zM445 329h2v1h-2zM445 330h2v1h-2zM450 321h4v1h-4zM449 322h2v1h-2zM453 322h2v1h-2zM449 323h2v1h-2zM453 323h2v1h-2zM449 324h2v1h-2zM453 324h2v1h-2zM449 325h2v1h-2zM453 325h2v1h-2zM449 326h2v1h-2zM453 326h2v1h-2zM449 327h2v1h-2zM453 327h2v1h-2zM449 328h2v1h-2zM453 328h2v1h-2zM449 329h2v1h-2zM453 329h2v1h-2zM450 330h4v1h-4zM458 321h4v1h-4zM457 322h2v1h-2zM461 322h2v1h-2zM457 323h2v1h-2zM461 323h2v1h-2zM457 324h2v1h-2zM461 324h2v1h-2zM457 325h2v1h-2zM461 325h2v1h-2zM457 326h2v1h-2zM461 326h2v1h-2zM457 327h2v1h-2zM461 327h2v1h-2zM457 328h2v1h-2zM461 328h2v1h-2zM457 329h2v1h-2zM461 329h2v1h-2zM458 330h4v1h-4zM472 321h4v1h-4zM471 322h2v1h-2zM475 322h2v1h-2zM471 323h2v1h-2zM471 324h2v1h-2zM471 325h5v1h-5zM471 326h2v1h-2zM475 326h2v1h-2zM471 327h2v1h-2zM475 327h2v1h-2zM471 328h2v1h-2zM475 328h2v1h-2zM471 329h2v1h-2zM475 329h2v1h-2zM472 330h4v1h-4zM480 321h4v1h-4zM479 322h2v1h-2zM483 322h2v1h-2zM483 323h2v1h-2zM483 324h2v1h-2zM481 325h3v1h-3zM483 326h2v1h-2zM483 327h2v1h-2zM483 328h2v1h-2zM479 329h2v1h-2zM483 329h2v1h-2zM480 330h4v1h-4zM488 321h4v1h-4zM487 322h2v1h-2zM491 322h2v1h-2zM487 323h2v1h-2zM491 323h2v1h-2zM487 324h2v1h-2zM491 324h2v1h-2zM487 325h2v1h-2zM491 325h2v1h-2zM487 326h2v1h-2zM491 326h2v1h-2zM487 327h2v1h-2zM491 327h2v1h-2zM487 328h2v1h-2zM491 328h2v1h-2zM487 329h2v1h-2zM491 329h2v1h-2zM488 330h4v1h-4zM500 321h2v1h-2zM498 322h4v1h-4zM500 323h2v1h-2zM500 324h2v1h-2zM500 325h2v1h-2zM500 326h2v1h-2zM500 327h2v1h-2zM500 328h2v1h-2zM500 329h2v1h-2zM500 330h2v1h-2zM507 321h4v1h-4zM506 322h2v1h-2zM510 322h2v1h-2zM506 323h2v1h-2zM510 323h2v1h-2zM506 324h2v1h-2zM510 324h2v1h-2zM506 325h2v1h-2zM510 325h2v1h-2zM506 326h2v1h-2zM510 326h2v1h-2zM506 327h2v1h-2zM510 327h2v1h-2zM506 328h2v1h-2zM510 328h2v1h-2zM506 329h2v1h-2zM510 329h2v1h-2zM507 330h4v1h-4zM515 321h4v1h-4zM514 322h2v1h-2zM518 322h2v1h-2zM514 323h2v1h-2zM518 323h2v1h-2zM514 324h2v1h-2zM518 324h2v1h-2zM514 325h2v1h-2zM518 325h2v1h-2zM514 326h2v1h-2zM518 326h2v1h-2zM514 327h2v1h-2zM518 327h2v1h-2zM514 328h2v1h-2zM518 328h2v1h-2zM514 329h2v1h-2zM518 329h2v1h-2zM515 330h4v1h-4zM523 321h4v1h-4zM522 322h2v1h-2zM526 322h2v1h-2zM522 323h2v1h-2zM526 323h2v1h-2zM522 324h2v1h-2zM526 324h2v1h-2zM522 325h2v1h-2zM526 325h2v1h-2zM522 326h2v1h-2zM526 326h2v1h-2zM522 327h2v1h-2zM526 327h2v1h-2zM522 328h2v1h-2zM526 328h2v1h-2zM522 329h2v1h-2zM526 329h2v1h-2zM523 330h4v1h-4zM551 321h2v1h-2zM557 321h2v1h-2zM551 322h2v1h-2zM557 322h2v1h-2zM551 323h2v1h-2zM557 323h2v1h-2zM551 324h2v1h-2zM557 324h2v1h-2zM551 325h8v1h-8zM551 326h2v1h-2zM557 326h2v1h-2zM551 327h2v1h-2zM557 327h2v1h-2zM551 328h2v1h-2zM557 328h2v1h-2zM551 329h2v1h-2zM557 329h2v1h-2zM551 330h2v1h-2zM557 330h2v1h-2zM561 324h6v1h-6zM565 325h2v1h-2zM564 326h2v1h-2zM563 327h2v1h-2zM562 328h2v1h-2zM561 329h2v1h-2zM561 330h6v1h-6zM570 321h2v1h-2zM570 322h2v1h-2zM570 323h2v1h-2zM570 324h2v1h-2zM569 325h2v1h-2zM569 326h2v1h-2zM569 327h2v1h-2zM569 328h2v1h-2zM568 329h2v1h-2zM568 330h2v1h-2zM568 331h2v1h-2zM568 332h2v1h-2zM575 321h2v1h-2zM573 322h4v1h-4zM575 323h2v1h-2zM575 324h2v1h-2zM575 325h2v1h-2zM575 326h2v1h-2zM575 327h2v1h-2zM575 328h2v1h-2zM575 329h2v1h-2zM575 330h2v1h-2zM582 321h4v1h-4zM581 322h2v1h-2zM585 322h2v1h-2zM581 323h2v1h-2zM585 323h2v1h-2zM581 324h2v1h-2zM585 324h2v1h-2zM581 325h2v1h-2zM585 325h2v1h-2zM581 326h2v1h-2zM585 326h2v1h-2zM581 327h2v1h-2zM585 327h2v1h-2zM581 328h2v1h-2zM585 328h2v1h-2zM581 329h2v1h-2zM585 329h2v1h-2zM582 330h4v1h-4z"/></svg>

<div class="chk" style="left:612px;top:57px;width:14px;height:270px"></div>
<div class="btn" style="left:612px;top:42px;width:14px;height:16px"><svg class="a" style="left:4px;top:5px" width="5" height="3" shape-rendering="crispEdges"><path d="M2 0h1v1h1v1h1v1h-5v-1h1v-1h1z" fill="#000"/></svg></div>
<div class="btn" style="left:612px;top:184px;width:14px;height:16px"></div>
<div class="btn" style="left:612px;top:326px;width:14px;height:16px"><svg class="a" style="left:4px;top:8px" width="5" height="3" shape-rendering="crispEdges"><path d="M0 0h5v1h-1v1h-1v1h-1v-1h-1v-1h-1z" fill="#000"/></svg></div>
<div class="chk" style="left:19px;top:342px;width:578px;height:14px"></div>
<div class="btn" style="left:4px;top:342px;width:16px;height:14px"><svg class="a" style="left:6px;top:4px" width="3" height="5" shape-rendering="crispEdges"><path d="M2 0h1v5h-1v-1h-1v-1h-1v-1h1v-1h1z" fill="#000"/></svg></div>
<div class="btn" style="left:20px;top:342px;width:16px;height:14px"></div>
<div class="btn" style="left:596px;top:342px;width:16px;height:14px"><svg class="a" style="left:7px;top:4px" width="3" height="5" shape-rendering="crispEdges"><path d="M0 0h1v1h1v1h1v1h-1v1h-1v1h-1z" fill="#000"/></svg></div>
<div class="a" style="left:612px;top:342px;width:14px;height:14px;background:#c0c0c0"></div>
<div class="a" style="left:4px;top:356px;width:622px;height:80px;background:#000080"></div>
<div class="pan" style="left:16px;top:364px;width:211px;height:65px"></div>
<div class="tx" style="left:93.04px;top:370px;font-size:11px;color:#000;transform:scaleX(0.9615);transform-origin:0 0;">Scan Input</div>
<div class="tx" style="left:33.0px;top:384px;font-size:11px;color:#000;transform:scaleX(0.9878);transform-origin:0 0;">Time Now (sec) :</div>
<div class="tx" style="left:31.99px;top:398px;font-size:11px;color:#000;transform:scaleX(1.0125);transform-origin:0 0;">Frequency (Hz) :</div>
<div class="tx" style="left:32.0px;top:412px;font-size:11px;color:#000;">Signal Level (dB)</div>
<div class="tx" style="left:132.0px;top:384px;font-size:11px;color:#000;">16</div>
<div class="tx" style="left:133.0px;top:398px;font-size:11px;color:#000;">00000</div>
<div class="tx" style="left:133.0px;top:412px;font-size:11px;color:#000;">000</div>
<div class="pan" style="left:242px;top:364px;width:204px;height:65px"></div>
<div class="tx" style="left:255.02px;top:370px;font-size:11px;color:#000;transform:scaleX(0.9785);transform-origin:0 0;">Display Band (Hz) :</div>
<div class="tx" style="left:255.02px;top:384px;font-size:11px;color:#000;transform:scaleX(0.9778);transform-origin:0 0;">Display Channels :</div>
<div class="tx" style="left:255.03px;top:398px;font-size:11px;color:#000;transform:scaleX(0.9674);transform-origin:0 0;">Sample Rate (Hz) :</div>
<div class="tx" style="left:255.03px;top:412px;font-size:11px;color:#000;transform:scaleX(0.97);transform-origin:0 0;">Sample Length (kb) :</div>
<div class="tx" style="left:360.0px;top:370px;font-size:11px;color:#000;">10 to 22050</div>
<div class="tx" style="left:359.97px;top:384px;font-size:11px;color:#000;transform:scaleX(1.0323);transform-origin:0 0;">Stereo</div>
<div class="tx" style="left:361.0px;top:398px;font-size:11px;color:#000;">44100</div>
<div class="tx" style="left:361.0px;top:412px;font-size:11px;color:#000;transform:scaleX(0.8333);transform-origin:0 0;">0</div>
<div class="pb" style="left:489px;top:366px;width:42px;height:21px"></div>
<div class="pb" style="left:531px;top:366px;width:77px;height:21px"></div>
<div class="pb" style="left:489px;top:387px;width:119px;height:21px"></div>
<div class="pb" style="left:489px;top:408px;width:119px;height:21px"></div>
<div class="tx dis crisp" style="left:494.92px;top:370px;font-size:13px;font-weight:bold;color:#000;transform:scaleX(1.0769);transform-origin:0 0;">Play</div>
<div class="tx dis crisp" style="left:536.93px;top:370px;font-size:13px;font-weight:bold;color:#000;transform:scaleX(1.0667);transform-origin:0 0;">Play Wdw</div>
<div class="tx crisp" style="left:513.0px;top:390px;font-size:13px;font-weight:bold;color:#000;transform:scaleX(1.0282);transform-origin:0 0;">Toggle Grid</div>
<div class="tx crisp" style="left:534.0px;top:411px;font-size:13px;font-weight:bold;color:#000;">Stop</div>
</body></html>
